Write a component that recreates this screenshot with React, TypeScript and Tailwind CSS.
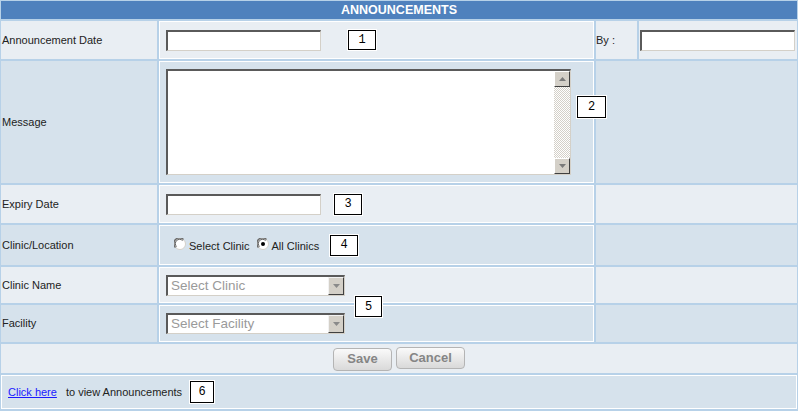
import React from 'react';

const inset =
    'border-t-2 border-l-2 border-b border-r border-t-[#5a5a5a] border-l-[#5a5a5a] border-b-[#d4d0c8] border-r-[#d4d0c8] bg-white';

function Tag({ n, className = '' }: { n: string; className?: string }) {
    return (
        <div
            className={`flex items-center justify-center border border-black bg-white shadow-[0_0_0_1px_#fff] font-['Liberation_Mono',monospace] text-[12px] leading-none text-black ${className}`}
        >
            {n}
        </div>
    );
}

function Radio({ checked }: { checked?: boolean }) {
    return (
        <svg width="12" height="12" viewBox="0 0 12 12" className="shrink-0">
            <circle cx="6" cy="6" r="5.5" fill="#fff" stroke="#d4d0c8" />
            <path d="M1.5 9.5 A5 5 0 0 1 9.5 1.5" fill="none" stroke="#6a6a6a" strokeWidth="1.4" />
            <path d="M2.6 8.6 A4 4 0 0 1 8.6 2.6" fill="none" stroke="#404040" strokeWidth="0.8" />
            {checked && <circle cx="6" cy="6" r="2" fill="#000" />}
        </svg>
    );
}

function SelectBox({ text }: { text: string }) {
    return (
        <div className={`flex h-[21px] w-[179px] items-center ${inset}`}>
            <span className="flex-1 pl-[3px] text-[13.5px] leading-none text-[#9a9a9a]">{text}</span>
            <div className="flex h-[18px] w-[16px] items-center justify-center border border-t-[#f2f2f2] border-l-[#f2f2f2] border-b-[#404040] border-r-[#404040] bg-[#d4d0c8]">
                <svg width="7" height="4" viewBox="0 0 7 4">
                    <path d="M0 0 H7 L3.5 4 Z" fill="#8a8a8a" />
                </svg>
            </div>
        </div>
    );
}

function ScrollBtn({ up }: { up?: boolean }) {
    return (
        <div className="flex h-[16px] w-[16px] items-center justify-center border border-t-[#fff] border-l-[#fff] border-b-[#404040] border-r-[#404040] bg-[#d4d0c8]">
            <svg width="7" height="4" viewBox="0 0 7 4">
                <path d={up ? 'M0 4 H7 L3.5 0 Z' : 'M0 0 H7 L3.5 4 Z'} fill="#7a7a7a" />
            </svg>
        </div>
    );
}

export default function App() {
    const light = 'bg-[#e9eef3]';
    const dark = 'bg-[#d6e2ec]';
    const mid = 'border border-white flex items-center px-[6px]';

    return (
        <div className="relative flex h-[411px] w-[798px] flex-col gap-[2px] bg-[#b7d1e8] px-[1px] pt-[1px] pb-[2px] font-['Liberation_Sans',Arial,sans-serif] text-[11px] text-[#222]">
            {/* Header */}
            <div className="flex h-[18px] items-center justify-center bg-[#4f81bd] text-[12.5px] font-bold text-white">
                ANNOUNCEMENTS
            </div>

            {/* Announcement date */}
            <div className="grid h-[38px] grid-cols-[156px_435px_41px_1fr] gap-x-[2px]">
                <div className={`${light} flex items-center pl-[1px]`}>Announcement Date</div>
                <div className={`${light} ${mid}`}>
                    <input className={`h-[21px] w-[155px] ${inset}`} />
                    <Tag n="1" className="ml-[27px] h-[20px] w-[28px]" />
                </div>
                <div className={`${light} flex items-center`}>By :</div>
                <div className={`${light} flex items-center pl-[1px]`}>
                    <input className={`h-[21px] w-[155px] ${inset}`} />
                </div>
            </div>

            {/* Message */}
            <div className="grid h-[122px] grid-cols-[156px_435px_1fr] gap-x-[2px]">
                <div className={`${dark} flex items-center pl-[1px]`}>Message</div>
                <div className={`${dark} ${mid}`}>
                    <div className={`flex h-[106px] w-[405px] ${inset}`}>
                        <div className="flex-1" />
                        <div className="flex w-[16px] flex-col bg-[repeating-conic-gradient(#d4d0c8_0%_25%,#ffffff_0%_50%)] bg-size-[2px_2px]">
                            <ScrollBtn up />
                            <div className="flex-1" />
                            <ScrollBtn />
                        </div>
                    </div>
                </div>
                <div className={dark} />
            </div>

            {/* Expiry */}
            <div className="grid h-[38px] grid-cols-[156px_435px_1fr] gap-x-[2px]">
                <div className={`${light} flex items-center pl-[1px]`}>Expiry Date</div>
                <div className={`${light} ${mid}`}>
                    <input className={`h-[21px] w-[155px] ${inset}`} />
                    <Tag n="3" className="ml-[13px] h-[21px] w-[28px]" />
                </div>
                <div className={light} />
            </div>

            {/* Clinic / location */}
            <div className="grid h-[40px] grid-cols-[156px_435px_1fr] gap-x-[2px]">
                <div className={`${dark} flex items-center pl-[1px]`}>Clinic/Location</div>
                <div className={`${dark} ${mid}`}>
                    <div className="ml-[8px] flex items-center">
                        <span className="mb-[2px]">
                            <Radio />
                        </span>
                        <span className="ml-[3px] mt-[2px]">Select Clinic</span>
                        <span className="ml-[7px] mb-[2px]">
                            <Radio checked />
                        </span>
                        <span className="ml-[3px] mt-[2px]">All Clinics</span>
                        <Tag n="4" className="ml-[11px] h-[21px] w-[28px]" />
                    </div>
                </div>
                <div className={dark} />
            </div>

            {/* Clinic name */}
            <div className="grid h-[36px] grid-cols-[156px_435px_1fr] gap-x-[2px]">
                <div className={`${light} flex items-center pl-[1px]`}>Clinic Name</div>
                <div className={`${light} ${mid}`}>
                    <SelectBox text="Select Clinic" />
                </div>
                <div className={light} />
            </div>

            {/* Facility */}
            <div className="grid h-[37px] grid-cols-[156px_435px_1fr] gap-x-[2px]">
                <div className={`${dark} flex items-center pl-[1px]`}>Facility</div>
                <div className={`${dark} ${mid}`}>
                    <SelectBox text="Select Facility" />
                </div>
                <div className={dark} />
            </div>

            {/* Buttons */}
            <div className={`${light} flex h-[29px] items-center justify-center gap-[4px]`}>
                <button className="mt-[1px] h-[23px] w-[59px] rounded-[4px] border border-[#b4b4b4] bg-linear-to-b from-[#fafafa] to-[#d9d9d9] text-[13px] font-bold text-[#858585]">
                    Save
                </button>
                <button className="mb-[1px] h-[22px] w-[69px] rounded-[4px] border border-[#b4b4b4] bg-linear-to-b from-[#fafafa] to-[#d9d9d9] text-[13px] font-bold text-[#858585]">
                    Cancel
                </button>
            </div>

            {/* Footer */}
            <div className={`${dark} flex h-[34px] items-center border border-white pl-[6px]`}>
                <a href="#" className="text-[#1a1aff] underline">
                    Click here
                </a>
                <span className="ml-[9px]">to view Announcements</span>
                <Tag n="6" className="ml-[8px] h-[22px] w-[24px]" />
            </div>

            {/* callouts over borders */}
            <Tag n="2" className="absolute top-[96px] left-[577px] h-[22px] w-[29px]" />
            <Tag n="5" className="absolute top-[296px] left-[355px] h-[21px] w-[27px]" />
        </div>
    );
}
